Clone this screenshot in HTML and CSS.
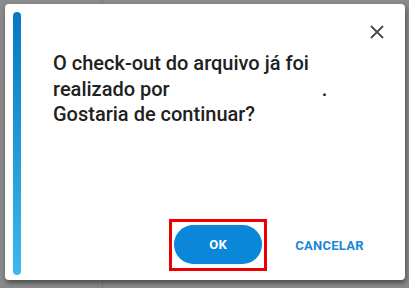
FILE: index.html
```html
<!DOCTYPE html>
<html lang="pt">
<head>
<meta charset="utf-8">
<link rel="stylesheet" href="styles.css">
</head>
<body>
<div class="dialog">
  <div class="bar"></div>
  <div class="main">
    <div class="head">
      <button class="close" aria-label="Fechar">
        <svg viewBox="0 0 24 24" width="24" height="24"><path d="M6 6 L18 18 M18 6 L6 18" stroke="#4a4a4a" stroke-width="1.8" fill="none"/></svg>
      </button>
    </div>
    <p class="message">O check-out do arquivo já foi<br>realizado por <span class="redacted">usuário</span>.<br>Gostaria de continuar?</p>
    <div class="actions">
      <div class="highlight"><button class="btn-ok">OK</button></div>
      <button class="btn-cancel">CANCELAR</button>
    </div>
  </div>
</div>
</body>
</html>
```
FILE: styles.css
```css
html, body {
  margin: 0;
  padding: 0;
}
body {
  width: 409px;
  height: 288px;
  overflow: hidden;
  background: linear-gradient(to right, #8a8a8a 0, #8a8a8a 102px, #7c7c7c 102px, #7c7c7c 103px, #8a8a8a 103px);
  font-family: Roboto, "Liberation Sans", sans-serif;
}
.dialog {
  box-sizing: border-box;
  margin: 4px 0 0 5px;
  width: 400px;
  height: 276px;
  background: #fff;
  border-radius: 4px;
  box-shadow: 1px 3px 5px rgba(0, 0, 0, 0.45);
  display: flex;
  padding: 8px 16px 5px 8px;
}
.bar {
  width: 8px;
  border-radius: 4px;
  background: linear-gradient(to bottom, #0877c6, #3cb9eb);
  flex-shrink: 0;
}
.main {
  flex: 1;
  display: flex;
  flex-direction: column;
  margin-left: 32px;
}
.head {
  display: flex;
  justify-content: flex-end;
  padding-top: 8px;
}
.close {
  width: 24px;
  height: 24px;
  padding: 0;
  margin-right: 0;
  border: 0;
  background: none;
  display: block;
}
.close svg {
  display: block;
}
.message {
  margin: 7px 0 0;
  font-size: 20px;
  line-height: 25.5px;
  color: #212121;
  font-weight: 500;
}
.redacted {
  display: inline-block;
  width: 147px;
  color: transparent;
}
.actions {
  margin-top: auto;
  margin-bottom: 4px;
  display: flex;
  align-items: center;
  justify-content: flex-end;
  padding-right: 9px;
}
.highlight {
  border: 3px solid #ec0000;
  padding: 3px 2px 4px 2px;
}
.btn-ok {
  display: block;
  width: 88px;
  height: 39px;
  border: 0;
  border-radius: 20px;
  background: #0b87d9;
  color: #fff;
  font-family: Roboto, "Liberation Sans", sans-serif;
  font-weight: 700;
  font-size: 13px;
  letter-spacing: 0.3px;
}
.btn-cancel {
  height: 39px;
  margin-left: 12px;
  padding: 0 16px;
  border: 0;
  background: none;
  color: #1787d8;
  font-family: Roboto, "Liberation Sans", sans-serif;
  font-weight: 700;
  font-size: 13px;
  letter-spacing: 0.3px;
}
```
